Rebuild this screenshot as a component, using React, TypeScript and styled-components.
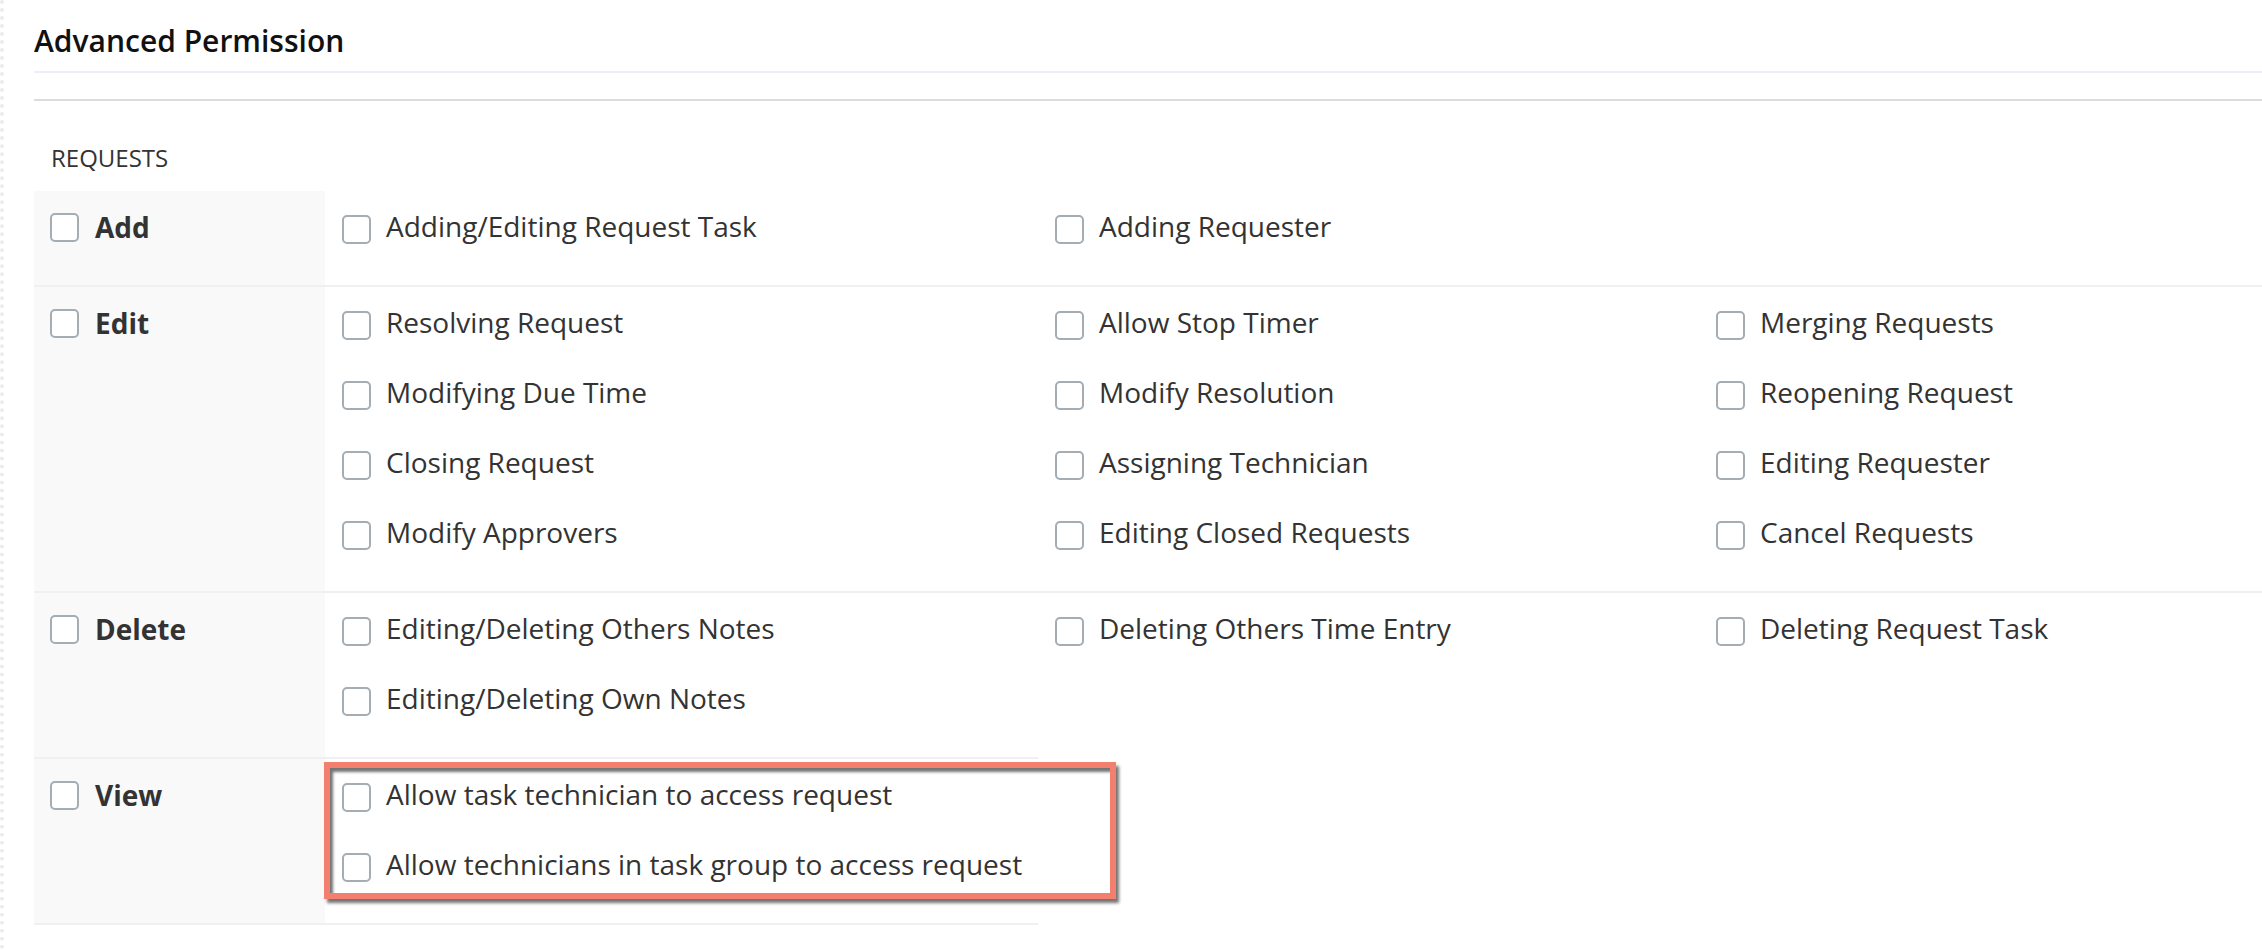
import React from "react";
import styled, { createGlobalStyle } from "styled-components";

const GlobalStyle = createGlobalStyle`
	body {
		margin: 0;
		background: #fff;
		font-family: "Open Sans", "Liberation Sans", sans-serif;
		color: #333;
	}
`;

type Section = {
	name: string;
	lines: string[][];
	highlight?: boolean;
};

const sections: Section[] = [
	{
		name: "Add",
		lines: [["Adding/Editing Request Task", "Adding Requester", ""]],
	},
	{
		name: "Edit",
		lines: [
			["Resolving Request", "Allow Stop Timer", "Merging Requests"],
			["Modifying Due Time", "Modify Resolution", "Reopening Request"],
			["Closing Request", "Assigning Technician", "Editing Requester"],
			["Modify Approvers", "Editing Closed Requests", "Cancel Requests"],
		],
	},
	{
		name: "Delete",
		lines: [
			["Editing/Deleting Others Notes", "Deleting Others Time Entry", "Deleting Request Task"],
			["Editing/Deleting Own Notes"],
		],
	},
	{
		name: "View",
		lines: [
			["Allow task technician to access request"],
			["Allow technicians in task group to access request"],
		],
		highlight: true,
	},
];

const App = () => {
	return (
		<Page>
			<GlobalStyle />
			<Title>Advanced Permission</Title>
			<Divider />
			<Module>REQUESTS</Module>

			{sections.map((section) => (
				<Row key={section.name}>
					<HeadCell $span={section.lines.length}>
						<Box />
						<HeadLabel>{section.name}</HeadLabel>
					</HeadCell>
					{section.lines.map((line, li) =>
						line.map((item, ci) => (
							<ItemCell
								key={`${li}-${ci}`}
								$col={ci + 2}
								$row={li + 1}
								$last={li === section.lines.length - 1}
							>
								{item && (
									<>
										<Box />
										<ItemLabel>{item}</ItemLabel>
									</>
								)}
							</ItemCell>
						))
					)}
					{section.highlight && <Highlight />}
				</Row>
			))}
		</Page>
	);
};

export default App;

const Page = styled.div`
	min-height: 950px;
	border-left: 4px dotted #ececec;
	padding-left: 30px;
	padding-top: 19px;
	box-sizing: border-box;
`;

const Title = styled.div`
	font-size: 30px;
	font-weight: 600;
	line-height: 44px;
	color: #111;
	padding-bottom: 8px;
	border-bottom: 2px solid #efeef6;
`;

const Divider = styled.div`
	margin-top: 26px;
	height: 2px;
	background-color: #dcdcdc;
`;

const Module = styled.div`
	margin-top: 40px;
	padding-left: 17px;
	font-size: 24px;
	line-height: 33px;
	color: #333;
	margin-bottom: 17px;
`;

const Row = styled.div`
	position: relative;
	display: grid;
	grid-template-columns: 291px 713px 661px 1fr;
`;

const HeadCell = styled.div<{ $span: number }>`
	grid-column: 1;
	grid-row: 1 / span ${(p) => p.$span};
	background-color: #f9f9f9;
	border-bottom: 2px solid #f0f0f0;
	display: flex;
	align-items: flex-start;
	padding: 22px 0 0 16px;
	gap: 16px;
`;

const HeadLabel = styled.span`
	font-size: 28px;
	font-weight: 700;
	line-height: 26px;
	margin-top: 1px;
	color: #333;
`;

const ItemCell = styled.div<{ $col: number; $row: number; $last: boolean }>`
	grid-column: ${(p) => p.$col};
	grid-row: ${(p) => p.$row};
	display: flex;
	align-items: flex-start;
	gap: 15px;
	box-sizing: border-box;
	height: ${(p) => (p.$last ? "96px" : "70px")};
	padding: 24px 0 0 17px;
	border-bottom: ${(p) => (p.$last ? "2px solid #f0f0f0" : "none")};
`;

const Box = styled.span`
	flex: none;
	width: 29px;
	height: 29px;
	box-sizing: border-box;
	border: 2px solid #a3adb3;
	border-radius: 5px;
	background: #fff;
`;

const ItemLabel = styled.span`
	font-size: 28px;
	line-height: 22px;
	margin-top: 0;
	color: #333;
	white-space: nowrap;
`;

const Highlight = styled.div`
	position: absolute;
	top: 3px;
	left: 290px;
	width: 792px;
	height: 137px;
	box-sizing: border-box;
	border: 6px solid #f3806f;
	box-shadow: 3px 4px 3px rgba(0, 0, 0, 0.55), inset 3px 4px 3px rgba(0, 0, 0, 0.55);
	pointer-events: none;
`;
